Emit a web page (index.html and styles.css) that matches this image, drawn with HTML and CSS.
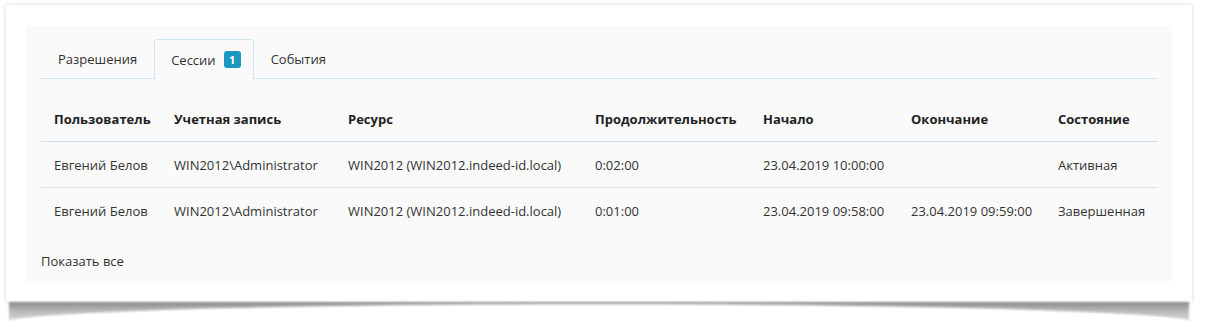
FILE: index.html
```html
<!DOCTYPE html>
<html lang="ru">
<head>
<meta charset="utf-8">
<link rel="stylesheet" href="styles.css">
</head>
<body>
<div class="card">
  <div class="panel">
    <ul class="tabs">
      <li class="tab">Разрешения</li>
      <li class="tab active">Сессии <span class="badge">1</span></li>
      <li class="tab">События</li>
    </ul>
    <table class="grid">
      <colgroup>
        <col class="c1"><col class="c2"><col class="c3"><col class="c4"><col class="c5"><col class="c6"><col class="c7">
      </colgroup>
      <thead>
        <tr>
          <th>Пользователь</th>
          <th>Учетная запись</th>
          <th>Ресурс</th>
          <th>Продолжительность</th>
          <th>Начало</th>
          <th>Окончание</th>
          <th>Состояние</th>
        </tr>
      </thead>
      <tbody>
        <tr>
          <td>Евгений Белов</td>
          <td>WIN2012\Administrator</td>
          <td>WIN2012 (WIN2012.indeed-id.local)</td>
          <td>0:02:00</td>
          <td>23.04.2019 10:00:00</td>
          <td></td>
          <td>Активная</td>
        </tr>
        <tr>
          <td>Евгений Белов</td>
          <td>WIN2012\Administrator</td>
          <td>WIN2012 (WIN2012.indeed-id.local)</td>
          <td>0:01:00</td>
          <td>23.04.2019 09:58:00</td>
          <td>23.04.2019 09:59:00</td>
          <td>Завершенная</td>
        </tr>
      </tbody>
    </table>
    <div class="show-all">Показать все</div>
  </div>
</div>
</body>
</html>
```

FILE: styles.css
```css
html {
  background: #ffffff;
}
body {
  margin: 0;
  padding: 5px 14px 30px 6px;
  font-family: "Open Sans", "Noto Sans", sans-serif;
  font-size: 13px;
  color: #333333;
}
.card {
  position: relative;
  width: 1186px;
  box-sizing: border-box;
  padding: 21px 20px 20px 20px;
  background: #ffffff;
  box-shadow: 0 0 4px rgba(0, 0, 0, 0.18);
}
.card::before {
  content: "";
  position: absolute;
  left: 3px;
  right: 3px;
  top: 100%;
  height: 21px;
  background: linear-gradient(to bottom, #8a8a8a 0%, #b2b2b2 35%, #cfcfcf 75%, #ececec 100%);
  filter: blur(1px);
}
.card::after {
  content: "";
  position: absolute;
  left: 0;
  right: 0;
  top: calc(100% + 4px);
  height: 34px;
  border-radius: 50%;
  background: #ffffff;
  box-shadow: 0 0 3px 2px #ffffff;
}
.panel {
  background: #fafafa;
  padding: 13px 14px 12px 15px;
}
.tabs {
  display: flex;
  list-style: none;
  margin: 0;
  padding: 0;
  border-bottom: 1px solid #cde8f1;
}
.tab {
  height: 38px;
  display: flex;
  align-items: center;
  padding: 0 16px;
  color: #333333;
  border: 1px solid transparent;
  border-bottom: none;
  border-radius: 3px 3px 0 0;
  margin-bottom: -1px;
}
.tab.active {
  border-color: #cde8f1;
  background: #fafafa;
  height: 39px;
  padding-right: 12px;
}
.badge {
  display: inline-block;
  margin-left: 8px;
  width: 17px;
  height: 17px;
  line-height: 17px;
  text-align: center;
  background: #1a98bd;
  color: #ffffff;
  font-weight: 700;
  font-size: 11px;
  border-radius: 3px;
}
.grid {
  border-collapse: collapse;
  table-layout: fixed;
  width: 1117px;
  margin-top: 17px;
}
.c1 { width: 120px; }
.c2 { width: 174px; }
.c3 { width: 247px; }
.c4 { width: 168px; }
.c5 { width: 148px; }
.c6 { width: 147px; }
.c7 { width: 113px; }
.grid th, .grid td {
  text-align: left;
  padding: 14px 0 13px 13px;
  line-height: 18px;
  white-space: nowrap;
}
.grid th {
  font-weight: 700;
  color: #222222;
  border-bottom: 1px solid #c8e4ee;
}
.grid tbody tr + tr td {
  border-top: 1px solid #e2e2e2;
}
.show-all {
  margin-top: 19px;
  line-height: 18px;
  color: #333333;
}
```
